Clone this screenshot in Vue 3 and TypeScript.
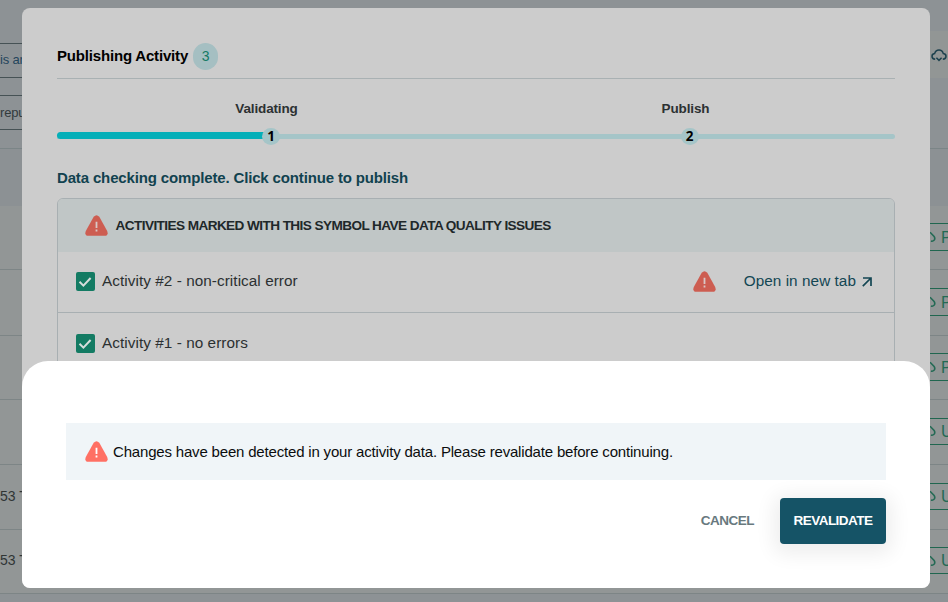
<script setup lang="ts">
import { defineComponent, h } from 'vue'

interface Activity { id: number; label: string; issue: boolean }

const activities: Activity[] = [
  { id: 2, label: 'Activity #2 - non-critical error', issue: true },
  { id: 1, label: 'Activity #1 - no errors', issue: false },
]

const rows = [
  { date: '', action: 'Publish' },
  { date: '', action: 'Publish' },
  { date: '', action: 'Publish' },
  { date: '', action: 'Unpublish' },
  { date: '53 T', action: 'Unpublish' },
  { date: '53 T', action: 'Unpublish' },
]

const WarningIcon = defineComponent({
  setup: () => () =>
    h('svg', { width: 23, height: 21, viewBox: '0 0 23 21' }, [
      h('path', { d: 'M8.7 1.8Q11.5-1.2 14.3 1.8L22.2 16Q23.8 20.6 19.6 20.8H3.4Q-.8 20.6 .8 16Z', fill: 'var(--warn)' }),
      h('path', { d: 'M11.5 6.7v6.2M11.5 14.6v2', stroke: 'var(--mark)', 'stroke-width': 1.8 }),
    ]),
})

const CloudIcon = defineComponent({
  setup: () => () =>
    h('svg', { width: 16, height: 13, viewBox: '0 0 16 13', fill: 'none', stroke: 'currentColor', 'stroke-width': 1.5 }, [
      h('path', { d: 'M4.2 10.3Q1 10 1 7.3Q1 5 3.6 4.6Q4.7 1 8 1Q11.3 1 12.3 4.6Q15 5 15 7.3Q15 10 11.8 10.3' }),
      h('path', { d: 'M5.4 8.8L8 11.4L10.6 8.8' }),
    ]),
})

const DropIcon = defineComponent({
  setup: () => () =>
    h('svg', { width: 6, height: 12, viewBox: '0 0 6 12', fill: 'none', stroke: 'currentColor', 'stroke-width': 1.6 }, [
      h('path', { d: 'M0 1.2L3.9 5.2Q5.6 7.4 4 9.3Q2.8 10.6 1 10' }),
    ]),
})
</script>

<template>
  <div class="screen">
    <div class="page">
      <div class="toolbar">
        <div class="filters">
          <div class="filter link">is an</div>
          <div class="filter">repu</div>
        </div>
        <div class="tools"><CloudIcon /></div>
      </div>
      <div class="head"></div>
      <div v-for="(row, i) in rows" :key="i" class="line">
        <span class="date">{{ row.date }}</span>
        <div class="action"><DropIcon /><span>{{ row.action[0] }}</span></div>
      </div>
    </div>

    <section class="dialog">
      <div class="content">
        <header class="title">
          <h1>Publishing Activity</h1>
          <span class="count">3</span>
        </header>
        <div class="steps">
          <div class="step"><span class="name">Validating</span></div>
          <div class="step"><span class="name">Publish</span></div>
        </div>
        <div class="progress">
          <div class="half done"><span class="dot">1</span></div>
          <div class="half"><span class="dot">2</span></div>
        </div>
        <p class="status">Data checking complete. Click continue to publish</p>
        <div class="list">
          <div class="notice">
            <WarningIcon /><span>ACTIVITIES MARKED WITH THIS SYMBOL HAVE DATA QUALITY ISSUES</span>
          </div>
          <div v-for="a in activities" :key="a.id" class="item">
            <span class="check">
              <svg width="19" height="19" viewBox="0 0 19 19"><path d="M3.5 9.7L7.4 13.6L14.6 6" fill="none" stroke="#d5dddb" stroke-width="2" /></svg>
            </span>
            <span class="label">{{ a.label }}</span>
            <template v-if="a.issue">
              <WarningIcon class="issue" />
              <a class="open">Open in new tab
                <svg width="10" height="10" viewBox="0 0 10 10"><path d="M1 1H9V9M9 1L.8 9.2" fill="none" stroke="currentColor" stroke-width="1.7" /></svg>
              </a>
            </template>
          </div>
        </div>
      </div>

      <div class="sheet">
        <div class="alert"><WarningIcon /><span>Changes have been detected in your activity data. Please revalidate before continuing.</span></div>
        <div class="buttons">
          <button class="cancel">CANCEL</button>
          <button class="primary">REVALIDATE</button>
        </div>
      </div>
    </section>
  </div>
</template>

<style>
body { margin: 0; overflow: hidden; }
</style>

<style scoped>
* { box-sizing: border-box; }
.screen {
  position: relative;
  width: 948px;
  height: 602px;
  overflow: hidden;
  background: #8d9295;
  font-family: "Liberation Sans", Arial, sans-serif;
  --warn: #cd5d51;
  --mark: #d9c7c5;
}
.page { display: flex; flex-direction: column; }
.toolbar { height: 149px; flex: none; display: flex; justify-content: space-between; border-bottom: 1px solid #7b8587; }
.filters { width: 26px; padding-top: 43px; display: flex; flex-direction: column; gap: 17px; }
.filter {
  height: 35px;
  border-top: 1px solid #465255;
  border-bottom: 1px solid #465255;
  font-size: 13px;
  line-height: 33px;
  letter-spacing: -.2px;
  white-space: nowrap;
  color: #323b3d;
}
.link { color: #24455c; line-height: 31px; }
.tools { width: 18px; height: 47px; margin-top: 31px; padding: 17px 0 0 1px; background: #929695; color: #1d414d; }
.head { height: 57px; flex: none; background: #8c9194; }
.line {
  height: 65px;
  flex: none;
  display: flex;
  align-items: center;
  justify-content: space-between;
  background: #929696;
  border-bottom: 1px solid #7d8586;
}
.line:nth-child(3) { height: 64px; }
.line:nth-child(4) { height: 66px; }
.line:nth-child(5) { height: 64px; }
.line:last-child { height: 64px; }
.date { width: 30px; font-size: 14px; white-space: nowrap; color: #303535; padding-bottom: 3px; }
.action {
  width: 19px;
  height: 28px;
  margin-bottom: 1px;
  display: flex;
  align-items: center;
  gap: 5px;
  border-top: 1px solid #20664f;
  border-bottom: 1px solid #20664f;
  color: #236a54;
  font-size: 16px;
}
.action span { padding-top: 1px; }
.line:nth-child(n+6) .action { height: 27px; margin-bottom: 2px; }
.action svg { flex: none; margin-left: 1px; }

.dialog {
  position: absolute;
  left: 22px;
  top: 8px;
  width: 908px;
  height: 580px;
  display: flex;
  flex-direction: column;
  background: #ccc;
  border-radius: 8px;
  overflow: hidden;
}
.content { height: 353px; flex: none; padding: 35px 35px 0; }
.title { height: 36px; display: flex; align-items: flex-start; gap: 5px; border-bottom: 1px solid #a9b1b3; }
h1 { margin: 0; font-size: 15px; line-height: 26px; letter-spacing: -.18px; color: #000; }
.count { width: 25px; height: 27px; border-radius: 14px; background: #a5bfc2; color: #167a64; text-align: center; font-size: 14px; line-height: 27px; }
.steps { display: flex; height: 53px; padding-top: 20px; }
.step { flex: 1; text-align: center; }
.name { font-size: 13.5px; line-height: 19px; font-weight: bold; letter-spacing: -.13px; color: #2c3132; }
.progress { display: flex; height: 7px; }
.half { flex: 1; position: relative; display: flex; justify-content: center; align-items: center; }
.half::before { content: ""; position: absolute; left: 0; right: 0; bottom: 0; height: 5px; background: #a5c5c8; }
.half:last-child::before { border-radius: 0 3px 3px 0; }
.done::after { content: ""; position: absolute; left: 0; bottom: 0; width: 207px; height: 7px; background: #05afb8; border-radius: 4px 0 0 4px; }
.dot { position: relative; z-index: 1; left: 4.5px; top: .5px; flex: none; width: 18px; height: 17px; border-radius: 50%; background: #a5c5c8; color: #000; font: bold 13.5px/17px "Open Sans", sans-serif; text-align: center; }
.half:last-child .dot { left: 4px; }
.status { margin: 0; height: 59px; padding-top: 28px; font-size: 15px; line-height: 22px; font-weight: bold; letter-spacing: -.15px; color: #11424f; white-space: nowrap; }
.list { height: 220px; border: 1px solid #a8afb2; border-radius: 6px; overflow: hidden; }
.notice { height: 53px; display: flex; align-items: center; gap: 7px; padding: 1px 0 0 27.5px; background: #c0c6c6; color: #20282a; font-size: 13.6px; font-weight: bold; letter-spacing: -.58px; white-space: nowrap; }
.notice svg { margin: 0 .5px 1px -.5px; }
.notice span { position: relative; top: -1px; }
.item { height: 61px; display: flex; align-items: center; padding: 0 22px 2px 18px; border-bottom: 1px solid #a8afb2; color: #2b3031; font-size: 15.3px; letter-spacing: .06px; }
.check { display: flex; width: 19px; height: 19px; margin: 1px 7px 0 0; background: #137b63; border-radius: 2px; }
.item:last-child .check { margin-top: 2px; }
.label { flex: 1; padding-top: 1px; }
.item:nth-child(2) .label, .open { padding: 0 0 1px; }
.issue { margin: 1px 27.5px 0 0; }
.open { display: flex; align-items: center; gap: 6px; color: #134653; }
.open svg { margin-top: 2px; }

.sheet { flex: 1; padding: 62px 44px 0; background: #fff; border-radius: 26px 26px 0 0; }
.content + .sheet { --warn: #ff7064; --mark: #fff; }
.alert { height: 57px; display: flex; align-items: center; gap: 5.5px; padding: 1px 18.5px; background: #f0f5f8; color: #0b0d0e; font-size: 15px; letter-spacing: -.18px; white-space: nowrap; }
.buttons { display: flex; justify-content: flex-end; gap: 26px; margin-top: 18px; }
button { height: 46px; padding: 0 0 2px; border: 0; font-family: inherit; font-size: 13.5px; font-weight: bold; }
.cancel { background: none; color: #68797e; letter-spacing: -.5px; }
.primary { width: 106px; border-radius: 4px; background: #155366; color: #fff; letter-spacing: -.52px; box-shadow: 0 4px 20px 6px rgba(0, 0, 0, .07); }
</style>
